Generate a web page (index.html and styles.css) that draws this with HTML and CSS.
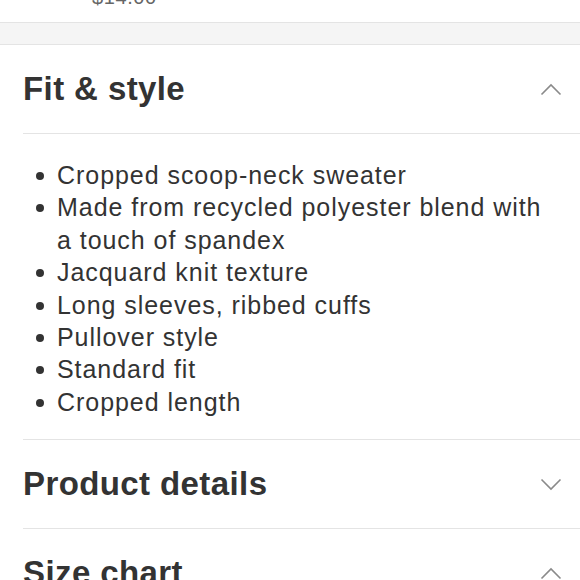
FILE: index.html
```html
<!DOCTYPE html>
<html>
<head>
<meta charset="utf-8">
<link rel="stylesheet" href="styles.css">
</head>
<body>
<div class="price-row"><div class="price">$14.00</div></div>
<div class="band"></div>
<div class="accordion">
  <div class="item">
    <div class="head">
      <h2>Fit &amp; style</h2>
      <svg class="chev" width="22" height="13" viewBox="0 0 22 13"><polyline points="1.5,11.5 11,2 20.5,11.5" fill="none" stroke="#8a8a8a" stroke-width="1.6"/></svg>
    </div>
    <ul class="list">
      <li>Cropped scoop-neck sweater</li>
      <li>Made from recycled polyester blend with a touch of spandex</li>
      <li>Jacquard knit texture</li>
      <li>Long sleeves, ribbed cuffs</li>
      <li>Pullover style</li>
      <li>Standard fit</li>
      <li>Cropped length</li>
    </ul>
  </div>
  <div class="item">
    <div class="head">
      <h2>Product details</h2>
      <svg class="chev" width="22" height="13" viewBox="0 0 22 13"><polyline points="1.5,1.5 11,11 20.5,1.5" fill="none" stroke="#8a8a8a" stroke-width="1.6"/></svg>
    </div>
  </div>
  <div class="item">
    <div class="head">
      <h2>Size chart</h2>
      <svg class="chev" width="22" height="13" viewBox="0 0 22 13"><polyline points="1.5,11.5 11,2 20.5,11.5" fill="none" stroke="#8a8a8a" stroke-width="1.6"/></svg>
    </div>
  </div>
</div>
</body>
</html>
```
FILE: styles.css
```css
html, body {
  margin: 0;
  padding: 0;
  background: #fff;
  font-family: "Liberation Sans", Arial, sans-serif;
  color: #333;
}
.price-row {
  height: 22px;
  overflow: hidden;
  padding-left: 92px;
}
.price {
  margin-top: -13px;
  font-size: 20px;
  line-height: 20px;
  color: #666;
  letter-spacing: 0.6px;
}
.band {
  height: 21px;
  background: #f5f5f5;
  border-top: 1px solid #e4e4e4;
  border-bottom: 1px solid #e4e4e4;
}
.accordion {
  margin-left: 23px;
}
.item {
  border-bottom: 1px solid #e4e4e4;
}
.head {
  height: 88px;
  display: flex;
  align-items: center;
  justify-content: space-between;
  padding-right: 18px;
}
.head h2 {
  margin: 0;
  font-size: 33px;
  font-weight: bold;
  color: #333;
  letter-spacing: 0.4px;
}
.chev {
  display: block;
}
.list {
  margin: 0;
  border-top: 1px solid #e4e4e4;
  padding: 25px 25px 21px 34px;
  font-size: 25px;
  line-height: 32.4px;
  letter-spacing: 0.95px;
  color: #333;
  list-style: none;
}
.list li::before {
  content: "";
  display: inline-block;
  width: 8px;
  height: 8px;
  border-radius: 50%;
  background: #333;
  margin-left: -21px;
  margin-right: 13px;
  vertical-align: 4px;
}
```
